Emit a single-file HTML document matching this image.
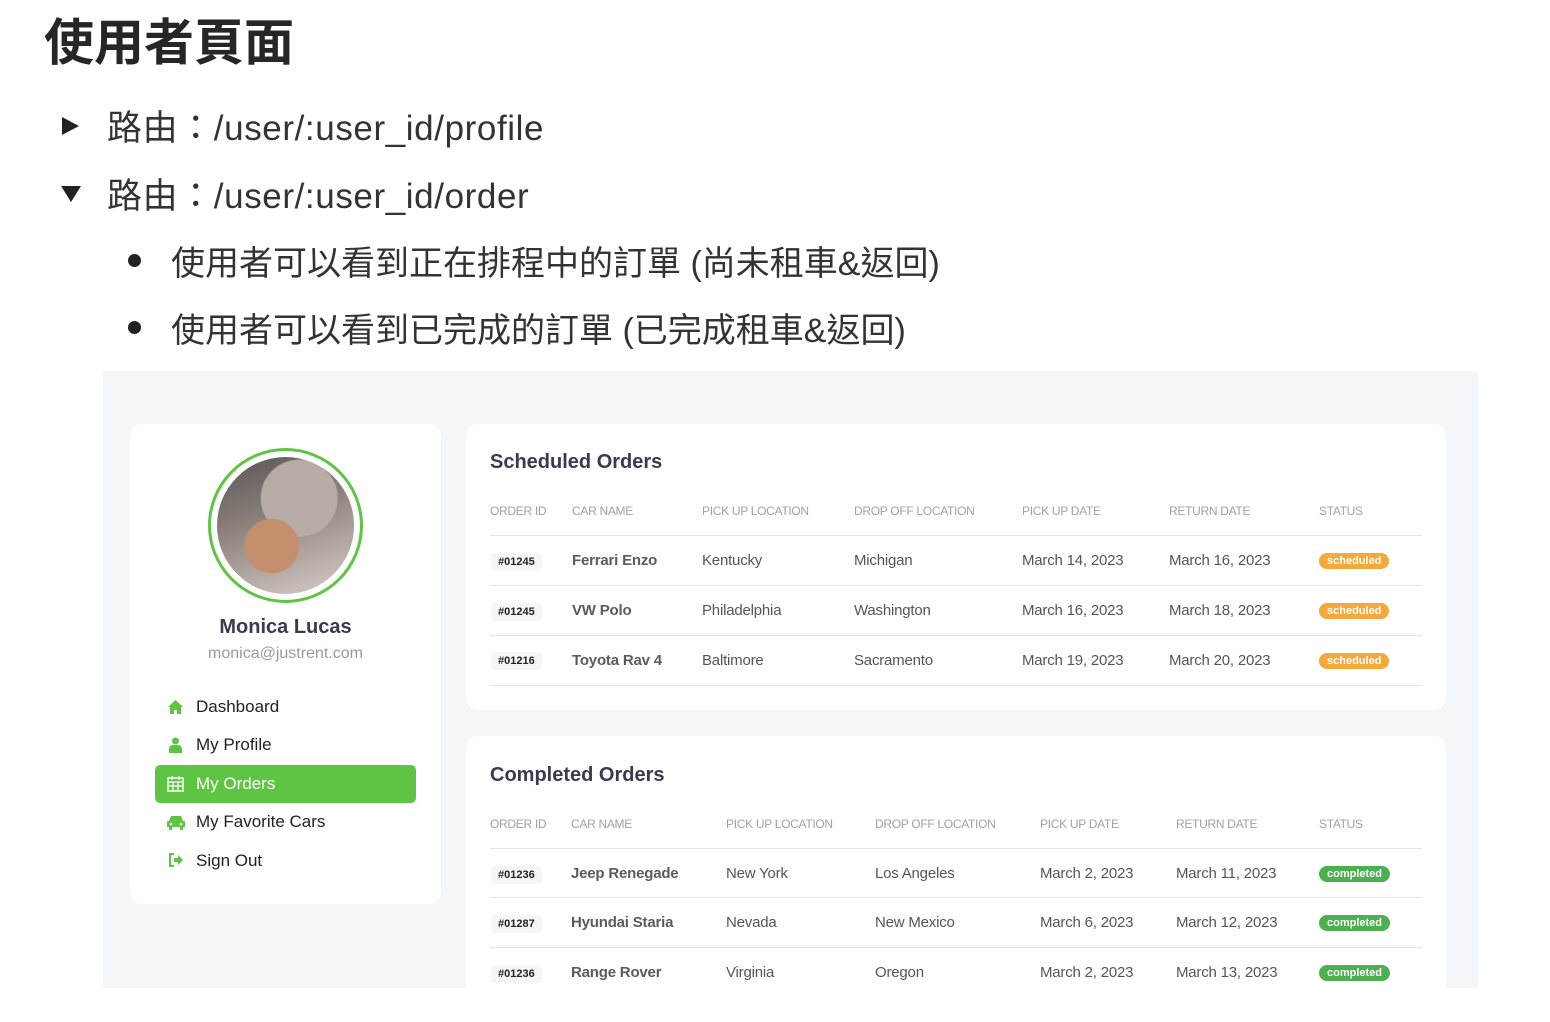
<!DOCTYPE html>
<html><head><meta charset="utf-8"><style>
*{margin:0;padding:0;box-sizing:border-box}
body{width:1550px;height:1022px;background:#fff;font-family:"Liberation Sans","Noto Sans CJK TC",sans-serif;position:relative;overflow:hidden;color:#222}
.a{position:absolute;white-space:nowrap}
h1{position:absolute;left:44px;top:3px;font-size:50px;font-weight:bold;color:#262626;font-family:"Liberation Sans","Noto Sans CJK TC",sans-serif}
.l{font-size:34px;color:#333}
.r{font-size:35px;letter-spacing:0.6px}
.panel{position:absolute;left:103px;top:371px;width:1375px;height:617px;background:#f5f6f8}
.card{position:absolute;background:#fff;border-radius:12px}
.th{position:absolute;font-size:12px;color:#a0a0a8;letter-spacing:-.3px}
.td{position:absolute;font-size:15px;color:#555;letter-spacing:-.2px}
.b{font-weight:bold;color:#5a5a60}
.id{position:absolute;font-size:11px;font-weight:bold;color:#222;background:#f5f6f8;border-radius:4px;padding:3px 7px}
.hr{position:absolute;height:1px;background:#e3e3e6}
.pill{position:absolute;font-size:11px;font-weight:bold;color:#fff;border-radius:10px;padding:2px 8px}
.nav{position:absolute;left:196px;font-size:17px;color:#222}
</style></head><body>
<h1>使用者頁面</h1>
<div class="a" style="left:62px;top:117px;width:0;height:0;border-left:17px solid #222;border-top:9px solid transparent;border-bottom:9px solid transparent"></div>
<div class="a l r" style="left:107px;top:100px">路由：/user/:user_id/profile</div>
<div class="a" style="left:61px;top:186px;width:0;height:0;border-top:16px solid #222;border-left:10px solid transparent;border-right:10px solid transparent"></div>
<div class="a l r" style="left:107px;top:168px">路由：/user/:user_id/order</div>
<div class="a" style="left:128px;top:254px;width:13px;height:13px;border-radius:50%;background:#222"></div>
<div class="a l" style="left:171px;top:236px">使用者可以看到正在排程中的訂單 (尚未租車&amp;返回)</div>
<div class="a" style="left:128px;top:321px;width:13px;height:13px;border-radius:50%;background:#222"></div>
<div class="a l" style="left:171px;top:303px">使用者可以看到已完成的訂單 (已完成租車&amp;返回)</div>

<div class="panel"></div>
<div class="card" style="left:130px;top:424px;width:311px;height:480px"></div>
<div class="a" style="left:208px;top:448px;width:155px;height:155px;border-radius:50%;border:3px solid #5ec443;padding:6px;background:#fff">
<div style="width:100%;height:100%;border-radius:50%;background:radial-gradient(circle at 40% 65%,#c58f6e 0 22%,transparent 23%),radial-gradient(circle at 60% 30%,#b8aca6 0 30%,transparent 31%),linear-gradient(160deg,#555 0%,#8a7f78 40%,#d9cfcb 100%)"></div></div>
<div class="a" style="left:130px;width:311px;text-align:center;top:616px;font-size:20px;font-weight:bold;color:#3a3a50">Monica Lucas</div>
<div class="a" style="left:130px;width:311px;text-align:center;top:645px;font-size:16px;color:#9a9a9a">monica@justrent.com</div>
<div class="a" style="left:155px;top:765px;width:261px;height:38px;background:#5ec443;border-radius:5px"></div>
<svg class="a" style="left:167px;top:699px" width="17" height="16" viewBox="0 0 17 16"><path d="M8.5 1L1 8h2v7h4v-4h3v4h4V8h2z" fill="#5ec443"/></svg>
<svg class="a" style="left:169px;top:737px" width="13" height="16" viewBox="0 0 13 16"><circle cx="6.5" cy="4" r="3.5" fill="#5ec443"/><path d="M0 16v-4a4 4 0 014-4h5a4 4 0 014 4v4z" fill="#5ec443"/></svg>
<svg class="a" style="left:167px;top:775px" width="17" height="17" viewBox="0 0 17 17"><rect x="1" y="3" width="15" height="13" fill="none" stroke="#fff" stroke-width="1.5"/><path d="M1 7h15M5 1v4M12 1v4M1 11h15M6 7v9M11 7v9" stroke="#fff" stroke-width="1.2"/></svg>
<svg class="a" style="left:166px;top:815px" width="20" height="15" viewBox="0 0 20 15"><path d="M3 6l2-5h10l2 5h2v6h-2v3h-3v-3H6v3H3v-3H1V6z" fill="#5ec443"/><circle cx="5" cy="9" r="1.3" fill="#fff"/><circle cx="15" cy="9" r="1.3" fill="#fff"/></svg>
<svg class="a" style="left:168px;top:853px" width="16" height="14" viewBox="0 0 16 14"><path d="M6 1H2v12h4" fill="none" stroke="#5ec443" stroke-width="2"/><path d="M6 5h4V2l5 5-5 5V9H6z" fill="#5ec443"/></svg>
<div class="nav" style="top:697px">Dashboard</div>
<div class="nav" style="top:735px">My Profile</div>
<div class="nav" style="top:774px;color:#fff">My Orders</div>
<div class="nav" style="top:812px">My Favorite Cars</div>
<div class="nav" style="top:851px">Sign Out</div>

<div class="card" style="left:466px;top:424px;width:980px;height:286px"></div>
<div class="a" style="left:490px;top:451px;font-size:20px;font-weight:bold;color:#3a3a50">Scheduled Orders</div>
<div class="th" style="left:490px;top:504px">ORDER ID</div><div class="th" style="left:572px;top:504px">CAR NAME</div><div class="th" style="left:702px;top:504px">PICK UP LOCATION</div><div class="th" style="left:854px;top:504px">DROP OFF LOCATION</div><div class="th" style="left:1022px;top:504px">PICK UP DATE</div><div class="th" style="left:1169px;top:504px">RETURN DATE</div><div class="th" style="left:1319px;top:504px">STATUS</div>
<div class="hr" style="left:490px;top:535px;width:932px"></div>
<div class="hr" style="left:490px;top:585px;width:932px"></div>
<div class="hr" style="left:490px;top:635px;width:932px"></div>
<div class="hr" style="left:490px;top:685px;width:932px"></div>

<div class="id" style="left:491px;top:553px">#01245</div><div class="td b" style="left:572px;top:552px">Ferrari Enzo</div><div class="td" style="left:702px;top:552px">Kentucky</div><div class="td" style="left:854px;top:552px">Michigan</div><div class="td" style="left:1022px;top:552px">March 14, 2023</div><div class="td" style="left:1169px;top:552px">March 16, 2023</div><div class="pill" style="left:1319px;top:553px;background:#f4a93a">scheduled</div>
<div class="id" style="left:491px;top:603px">#01245</div><div class="td b" style="left:572px;top:602px">VW Polo</div><div class="td" style="left:702px;top:602px">Philadelphia</div><div class="td" style="left:854px;top:602px">Washington</div><div class="td" style="left:1022px;top:602px">March 16, 2023</div><div class="td" style="left:1169px;top:602px">March 18, 2023</div><div class="pill" style="left:1319px;top:603px;background:#f4a93a">scheduled</div>
<div class="id" style="left:491px;top:652px">#01216</div><div class="td b" style="left:572px;top:652px">Toyota Rav 4</div><div class="td" style="left:702px;top:652px">Baltimore</div><div class="td" style="left:854px;top:652px">Sacramento</div><div class="td" style="left:1022px;top:652px">March 19, 2023</div><div class="td" style="left:1169px;top:652px">March 20, 2023</div><div class="pill" style="left:1319px;top:653px;background:#f4a93a">scheduled</div>

<div class="card" style="left:466px;top:736px;width:980px;height:252px;border-radius:12px 12px 0 0"></div>
<div class="a" style="left:490px;top:764px;font-size:20px;font-weight:bold;color:#3a3a50">Completed Orders</div>
<div class="th" style="left:490px;top:817px">ORDER ID</div><div class="th" style="left:571px;top:817px">CAR NAME</div><div class="th" style="left:726px;top:817px">PICK UP LOCATION</div><div class="th" style="left:875px;top:817px">DROP OFF LOCATION</div><div class="th" style="left:1040px;top:817px">PICK UP DATE</div><div class="th" style="left:1176px;top:817px">RETURN DATE</div><div class="th" style="left:1319px;top:817px">STATUS</div>
<div class="hr" style="left:490px;top:848px;width:932px"></div>
<div class="hr" style="left:490px;top:897px;width:932px"></div>
<div class="hr" style="left:490px;top:947px;width:932px"></div>

<div class="id" style="left:491px;top:866px">#01236</div><div class="td b" style="left:571px;top:865px">Jeep Renegade</div><div class="td" style="left:726px;top:865px">New York</div><div class="td" style="left:875px;top:865px">Los Angeles</div><div class="td" style="left:1040px;top:865px">March 2, 2023</div><div class="td" style="left:1176px;top:865px">March 11, 2023</div><div class="pill" style="left:1319px;top:866px;background:#4caf50">completed</div>
<div class="id" style="left:491px;top:915px">#01287</div><div class="td b" style="left:571px;top:914px">Hyundai Staria</div><div class="td" style="left:726px;top:914px">Nevada</div><div class="td" style="left:875px;top:914px">New Mexico</div><div class="td" style="left:1040px;top:914px">March 6, 2023</div><div class="td" style="left:1176px;top:914px">March 12, 2023</div><div class="pill" style="left:1319px;top:915px;background:#4caf50">completed</div>
<div class="id" style="left:491px;top:965px">#01236</div><div class="td b" style="left:571px;top:964px">Range Rover</div><div class="td" style="left:726px;top:964px">Virginia</div><div class="td" style="left:875px;top:964px">Oregon</div><div class="td" style="left:1040px;top:964px">March 2, 2023</div><div class="td" style="left:1176px;top:964px">March 13, 2023</div><div class="pill" style="left:1319px;top:965px;background:#4caf50">completed</div>
<div class="a" style="left:0;top:988px;width:1550px;height:34px;background:#fff"></div>
</body></html>
